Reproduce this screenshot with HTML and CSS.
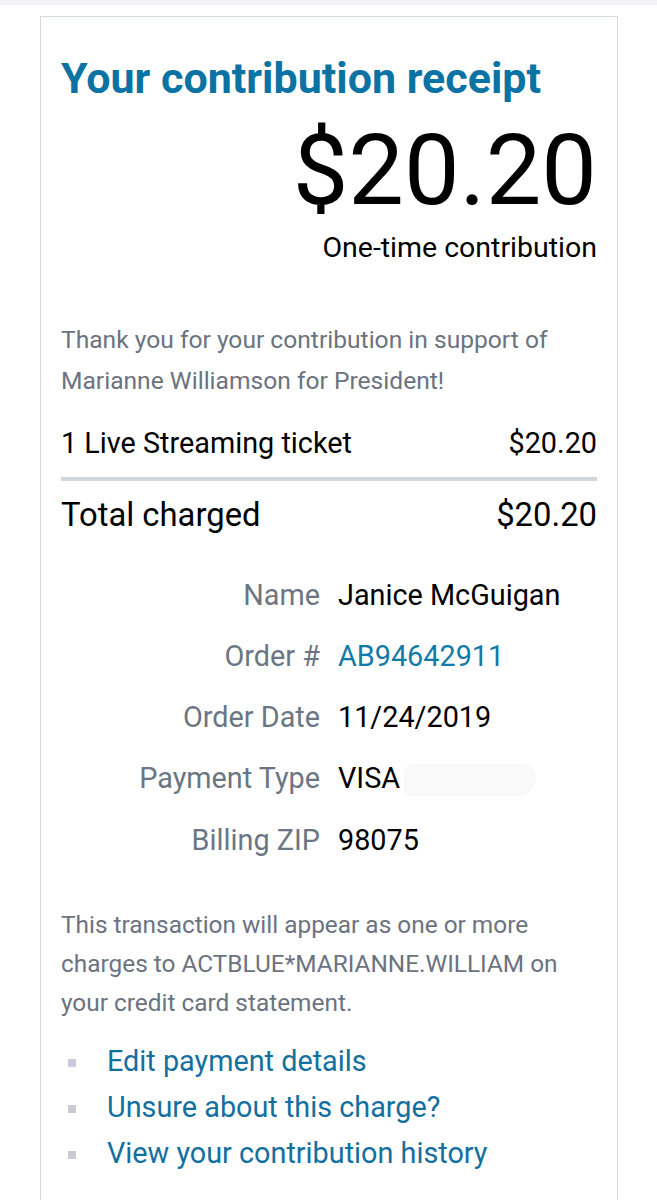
FILE: index.html
```html
<!DOCTYPE html>
<html lang="en">
<head>
    <meta charset="UTF-8">
    <meta name="viewport" content="width=device-width, initial-scale=1.0">
    <title>Your contribution receipt</title>
    <link rel="stylesheet" href="styles.css">
</head>
<body>
    <div class="topbar"></div>
    <div class="card">
        <h1 class="title">Your contribution receipt</h1>

        <div class="amount">$20.20</div>
        <div class="frequency">One-time contribution</div>

        <p class="note thanks">Thank you for your contribution in support of Marianne Williamson for President!</p>

        <div class="line-item">
            <span>1 Live Streaming ticket</span>
            <span>$20.20</span>
        </div>
        <div class="total">
            <span>Total charged</span>
            <span>$20.20</span>
        </div>

        <dl class="details">
            <dt>Name</dt>
            <dd>Janice McGuigan</dd>
            <dt>Order #</dt>
            <dd class="order-no">AB94642911</dd>
            <dt>Order Date</dt>
            <dd>11/24/2019</dd>
            <dt>Payment Type</dt>
            <dd>VISA<span class="smudge"></span></dd>
            <dt>Billing ZIP</dt>
            <dd>98075</dd>
        </dl>

        <p class="note statement">This transaction will appear as one or more charges to ACTBLUE*MARIANNE.WILLIAM on your credit card statement.</p>

        <ul class="links">
            <li><a href="#">Edit payment details</a></li>
            <li><a href="#">Unsure about this charge?</a></li>
            <li><a href="#">View your contribution history</a></li>
        </ul>
    </div>
</body>
</html>
```

FILE: styles.css
```css
body {
    margin: 0;
    background: #fff;
    font-family: Roboto, "Liberation Sans", sans-serif;
    color: #000;
}
.topbar {
    height: 5px;
    background: #f1f3f6;
}
.card {
    margin: 11px 39px 0 40px;
    border: 1px solid #d5d9e0;
    border-bottom: none;
    padding: 36px 20px 25px;
}
.title {
    margin: 0;
    font-size: 43px;
    font-weight: 700;
    line-height: 50px;
    color: #0b73a3;
}
.amount {
    text-align: right;
    font-size: 99px;
    line-height: 110px;
    margin-top: 12px;
}
.frequency {
    text-align: right;
    font-size: 28.5px;
    line-height: 34px;
    margin-top: 6px;
}
.note {
    color: #6b7380;
    margin: 0;
}
.thanks {
    font-size: 24.6px;
    line-height: 41px;
    margin-top: 54px;
}
.line-item, .total {
    display: flex;
    justify-content: space-between;
}
.line-item {
    font-size: 28.8px;
    line-height: 34px;
    margin-top: 25px;
    padding-bottom: 17px;
    border-bottom: 4px solid #d2d6dd;
}
.total {
    font-size: 32.8px;
    line-height: 40px;
    margin-top: 14px;
}
.details {
    display: grid;
    grid-template-columns: 259px 1fr;
    column-gap: 18px;
    row-gap: 27px;
    margin: 43px 0 0;
    font-size: 28.8px;
    line-height: 34px;
}
.details dt {
    text-align: right;
    color: #6b7684;
}
.details dd {
    margin: 0;
}
.order-no {
    color: #127aa8;
}
.smudge {
    display: inline-block;
    width: 132px;
    height: 32px;
    margin-left: 4px;
    vertical-align: middle;
    background: #f9f9f9;
    border-radius: 10px 16px 22px 6px;
}
.statement {
    font-size: 24.4px;
    line-height: 39px;
    margin-top: 48px;
}
.links {
    list-style: none;
    margin: 16px 0 0;
    padding: 0;
}
.links li {
    display: flex;
    align-items: center;
    font-size: 28.8px;
    line-height: 46px;
}
.links li::before {
    content: "";
    width: 8px;
    height: 8px;
    background: #c9ccd6;
    margin: 4px 31px 0 7px;
}
.links a {
    color: #13709e;
    text-decoration: none;
}
```
